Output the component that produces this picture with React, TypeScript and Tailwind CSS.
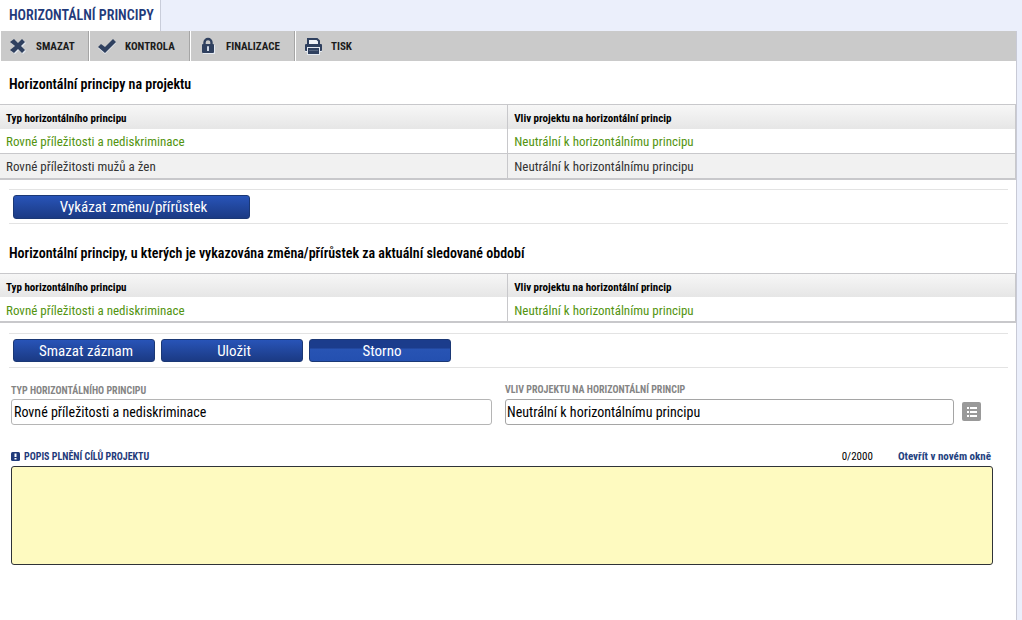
import React, { useState } from 'react';
import clsx from 'clsx';

type Row = { type: string; impact: string; active?: boolean };

const PROJECT_ROWS: Row[] = [
  { type: 'Rovné příležitosti a nediskriminace', impact: 'Neutrální k horizontálnímu principu', active: true },
  { type: 'Rovné příležitosti mužů a žen', impact: 'Neutrální k horizontálnímu principu' },
];

const CHANGE_ROWS: Row[] = [PROJECT_ROWS[0]];

function CrossIcon() {
  return (
    <svg viewBox="0 0 18 18" className="w-[18px] h-[18px]" aria-hidden="true">
      <path d="M1 5l4-3 4 4 4-4 3 3-4 4 4 4-3 3-4-4-4 4-4-3 5-4z" fill="#e4e9f0" transform="translate(1 1)" />
      <path d="M1 5l4-3 4 4 4-4 3 3-4 4 4 4-3 3-4-4-4 4-4-3 5-4z" fill="#2f405f" />
    </svg>
  );
}

function CheckIcon() {
  return (
    <svg viewBox="0 0 18 18" className="w-[18px] h-[18px]" aria-hidden="true">
      <path d="M0 10l3-3 4 3 8-8 3 3L7 16z" fill="#e4e9f0" transform="translate(0 1)" />
      <path d="M0 10l3-3 4 3 8-8 3 3L7 16z" fill="#2f405f" />
    </svg>
  );
}

function LockIcon() {
  return (
    <svg viewBox="0 0 18 18" className="w-[18px] h-[18px]" aria-hidden="true">
      <path d="M4 8h12v9H4z" fill="#e4e9f0" />
      <path d="M5.500 8V5.500a3.500 3.500 0 0 1 7 0V8" fill="none" stroke="#2f405f" strokeWidth="2.400" />
      <rect x="3" y="7" width="12" height="9" rx="1" fill="#2f405f" />
      <path d="M9 9a1 1 0 0 1 1 1v4H8v-4a1 1 0 0 1 1-1z" fill="#cfd8e6" />
    </svg>
  );
}

function PrinterIcon() {
  return (
    <svg viewBox="0 0 18 18" className="w-[18px] h-[18px]" aria-hidden="true">
      <path d="M4 7V2h9l2 2v3" fill="#eef1f6" stroke="#2f405f" strokeWidth="2" />
      <path d="M1 14h17v1H1z" fill="#e4e9f0" />
      <rect x="1" y="7" width="17" height="7" rx="1" fill="#2f405f" />
      <path d="M3 10h13v8H3z" fill="#e4e9f0" />
      <path d="M4 11h11v6H4z" fill="#2f405f" />
      <path d="M5 13h9v1H5z" fill="#56657f" />
    </svg>
  );
}

function ListIcon() {
  return (
    <svg viewBox="0 0 19 19" className="w-[19px] h-[19px]" aria-hidden="true">
      <rect width="19" height="19" rx="2" fill="#999" />
      <path d="M5 5h2v2H5zM8 5h7v2H8zM5 9h2v2H5zM8 9h7v2H8zM5 13h2v2H5zM8 13h7v2H8z" fill="#fff" />
    </svg>
  );
}

function ToolButton({ icon, label, className }: { icon: React.ReactNode; label: string; className?: string }) {
  return (
    <button
      type="button"
      className={clsx(
        'flex items-center gap-[9px] h-full pl-2 border-l border-l-white text-[11px] leading-4 font-bold text-[#1c1c1c] cursor-pointer',
        className
      )}
    >
      {icon}
      <span className="pt-px">{label}</span>
    </button>
  );
}

function PrincipleTable({ rows }: { rows: Row[] }) {
  return (
    <table className="w-full table-fixed border-collapse text-left border-t border-b-2 border-r border-[#c8c8cb]">
      <thead>
        <tr className="h-6 bg-linear-to-b from-[#f7f7f7] to-[#e6e6e6] text-[11px] leading-4 text-black">
          <th className="px-[6px] pt-[5px] pb-0 font-bold border-r border-[#c8c8cb]">Typ horizontálního principu</th>
          <th className="px-[6px] pt-[5px] pb-0 font-bold">Vliv projektu na horizontální princip</th>
        </tr>
      </thead>
      <tbody className="text-[13px] leading-4">
        {rows.map((row, i) => (
          <tr
            key={row.type}
            className={clsx(
              'h-[25px]',
              i > 0 && 'border-t border-[#c8c8cb] bg-[#f1f1f1]',
              row.active ? 'text-[#539410]' : 'text-[#333]'
            )}
          >
            <td className="px-[6px] pt-[3px] pb-0 border-r border-[#c8c8cb]">{row.type}</td>
            <td className="px-[6px] pt-[3px] pb-0">{row.impact}</td>
          </tr>
        ))}
      </tbody>
    </table>
  );
}

function ActionButton({ label, className }: { label: string; className: string }) {
  return (
    <button
      type="button"
      className={clsx(
        'pl-1 rounded-[3px] border border-[#1b3875] text-[15px] leading-5 text-white cursor-pointer',
        className
      )}
    >
      {label}
    </button>
  );
}

const BLUE = 'bg-linear-to-b from-[#2854b8] to-[#1b3a84]';

export default function App() {
  const [text, setText] = useState('');

  return (
    <div className="min-h-screen flex flex-col bg-[#ebeffb] pr-[5px] font-['Roboto_Condensed','Liberation_Sans_Narrow',Roboto,sans-serif]">
      <nav className="flex h-[31px]">
        <a
          href="#principy"
          className="flex items-center bg-white pl-[9px] pr-[6px] pb-[2px] border-r border-[#c9cdda] text-[14px] leading-5 font-semibold text-[#1f3a7a]"
        >
          HORIZONTÁLNÍ PRINCIPY
        </a>
      </nav>

      <main id="principy" className="flex-1 bg-white border-r border-[#c8cad6]">
        <div className="flex items-center h-[30px] bg-[#cacaca]">
          <ToolButton icon={<CrossIcon />} label="SMAZAT" className="w-[89px] border-r border-r-[#a5a5a5]" />
          <ToolButton icon={<CheckIcon />} label="KONTROLA" className="w-[101px] border-r border-r-[#a5a5a5]" />
          <ToolButton icon={<LockIcon />} label="FINALIZACE" className="w-[105px] border-r border-r-[#a5a5a5]" />
          <ToolButton icon={<PrinterIcon />} label="TISK" className="pr-2" />
        </div>

        <h2 className="px-[9px] pt-[13px] pb-[10px] text-[14px] leading-5 font-semibold text-black">
          Horizontální principy na projektu
        </h2>
        <PrincipleTable rows={PROJECT_ROWS} />

        <div className="flex mt-[9px] ml-[9px] mr-2 px-1 pt-[5px] pb-1 border-y border-[#e3e3e3]">
          <ActionButton label="Vykázat změnu/přírůstek" className={clsx('w-[237px] h-6', BLUE)} />
        </div>

        <h2 className="px-[9px] pt-[19px] pb-[10px] text-[14px] leading-5 font-semibold text-black">
          Horizontální principy, u kterých je vykazována změna/přírůstek za aktuální sledované období
        </h2>
        <PrincipleTable rows={CHANGE_ROWS} />

        <div className="flex gap-[6px] mt-[10px] ml-[9px] mr-2 px-1 py-[5px] border-y border-[#e3e3e3]">
          <ActionButton label="Smazat záznam" className={clsx('w-[142px] h-[23px]', BLUE)} />
          <ActionButton label="Uložit" className={clsx('w-[142px] h-[23px]', BLUE)} />
          <ActionButton
            label="Storno"
            className="w-[142px] h-[23px] bg-[linear-gradient(#1b3c8c_0%,#1b3c8c_40%,#2854b4_41%,#2450b0_100%)]"
          />
        </div>

        <form className="pl-[11px] pr-[23px] pt-4">
          <div className="flex items-end gap-[13px]">
            <div className="flex-[481] flex flex-col">
              <label htmlFor="type" className="text-[10px] leading-3 pb-[2px] font-bold text-[#858585]">
                TYP HORIZONTÁLNÍHO PRINCIPU
              </label>
              <input
                id="type"
                readOnly
                defaultValue="Rovné příležitosti a nediskriminace"
                className="w-full h-[26px] px-[2px] rounded-[3px] border border-[#b5b5b5] bg-white text-[14px] text-black"
              />
            </div>
            <div className="flex-[476] flex items-end gap-2 mr-3">
              <div className="flex-1 flex flex-col">
                <label htmlFor="impact" className="text-[10px] leading-3 pb-[3px] font-bold text-[#858585]">
                  VLIV PROJEKTU NA HORIZONTÁLNÍ PRINCIP
                </label>
                <input
                  id="impact"
                  readOnly
                  defaultValue="Neutrální k horizontálnímu principu"
                  className="w-full h-[26px] px-px rounded-[3px] border border-[#a5a5a5] bg-white text-[14px] text-black"
                />
              </div>
              <button type="button" aria-label="Vybrat ze seznamu" className="mb-1 cursor-pointer">
                <ListIcon />
              </button>
            </div>
          </div>

          <div className="flex items-center mt-[23px] pb-px pr-[2px] h-[18px] text-[11px] leading-4">
            <label htmlFor="desc" className="flex items-center gap-1 text-[10px] font-bold text-[#1f3a7a]">
              <svg viewBox="0 0 9 9" className="w-[9px] h-[9px]" aria-hidden="true">
                <rect width="9" height="9" rx="1.500" fill="#1f3a7a" />
                <path d="M3.500 1.500h2v3.500h-2zM3.500 6h2v1.500h-2z" fill="#fff" />
              </svg>
              POPIS PLNĚNÍ CÍLŮ PROJEKTU
            </label>
            <span className="ml-auto text-black">{text.length}/2000</span>
            <a href="#desc" className="ml-[25px] font-bold text-[#24427f]">
              Otevřít v novém okně
            </a>
          </div>
          <textarea
            id="desc"
            maxLength={2000}
            value={text}
            onChange={e => setText(e.target.value)}
            className="block w-full h-[99px] p-1 resize-none rounded-[3px] border border-[#2f3338] bg-[#fefac0] text-[14px] text-black outline-none"
          />
        </form>
      </main>
    </div>
  );
}
